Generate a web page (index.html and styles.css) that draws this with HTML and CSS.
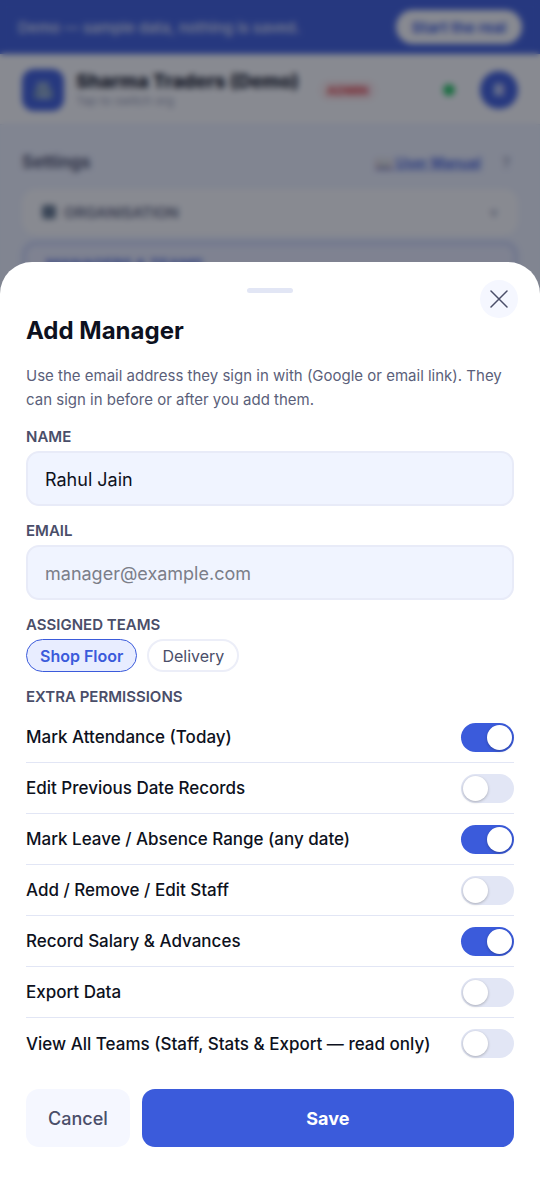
FILE: index.html
```html
<!DOCTYPE html>
<html lang="en">
  <head>
    <title>Sharma Traders (Demo) - Settings</title>
    <meta charset="UTF-8" />
    <meta name="viewport" content="width=device-width, initial-scale=1" />
    <link rel="stylesheet" href="styles.css">
  </head>
  <body>
    <div class="demo-bar">
      <span>Demo — sample data, nothing is saved.</span>
      <button class="demo-btn" type="button">Start the real</button>
    </div>

    <header class="topbar">
      <svg class="logo" viewBox="0 0 42 42" aria-hidden="true">
        <rect width="42" height="42" rx="12" fill="#3b5bdb" />
        <path d="M15 13h12v17H15z" fill="#9fb8d8" />
        <path d="M12 20h5v10h-5zM27 20h4v10h-4z" fill="#7594bc" />
        <path d="M18 16h2v3h-2zM23 16h2v3h-2zM18 22h2v3h-2zM23 22h2v3h-2z" fill="#3f5f8f" />
      </svg>
      <div class="org">
        <div class="org-name">Sharma Traders (Demo)</div>
        <div class="org-sub">Tap to switch org</div>
      </div>
      <span class="role">ADMIN</span>
      <span class="online"></span>
      <span class="avatar">R</span>
    </header>

    <main class="settings">
      <div class="settings-head">
        <h1>Settings</h1>
        <a href="#">📖 User Manual</a>
        <span class="more">?</span>
      </div>
      <div class="card">
        <span class="card-icon"></span>
        <span>ORGANISATION</span>
        <span class="chevron">▾</span>
      </div>
      <div class="card card-open">
        <span>MANAGERS &amp; TEAMS</span>
      </div>
    </main>

    <div class="overlay">
      <form class="sheet" role="dialog" aria-labelledby="sheet-title">
        <div class="handle"></div>
        <button class="close" type="button" aria-label="Close">
          <svg viewBox="0 0 18 18" aria-hidden="true">
            <path d="M1 1l16 16M17 1L1 17" />
          </svg>
        </button>
        <h2 id="sheet-title">Add Manager</h2>
        <p class="hint">
          Use the email address they sign in with (Google or email link). They
          can sign in before or after you add them.
        </p>

        <label class="label" for="name">NAME</label>
        <input class="text-input" id="name" type="text" value="Rahul Jain" />

        <label class="label" for="email">EMAIL</label>
        <input class="text-input" id="email" type="email" placeholder="manager@example.com" />

        <div class="label">ASSIGNED TEAMS</div>
        <div class="chips">
          <button class="chip chip-on" type="button" aria-pressed="true">Shop Floor</button>
          <button class="chip" type="button" aria-pressed="false">Delivery</button>
        </div>

        <div class="label">EXTRA PERMISSIONS</div>
        <div class="perms">
          <label class="perm">
            <span>Mark Attendance (Today)</span>
            <input class="toggle" type="checkbox" checked />
          </label>
          <label class="perm">
            <span>Edit Previous Date Records</span>
            <input class="toggle" type="checkbox" />
          </label>
          <label class="perm">
            <span>Mark Leave / Absence Range (any date)</span>
            <input class="toggle" type="checkbox" checked />
          </label>
          <label class="perm">
            <span>Add / Remove / Edit Staff</span>
            <input class="toggle" type="checkbox" />
          </label>
          <label class="perm">
            <span>Record Salary &amp; Advances</span>
            <input class="toggle" type="checkbox" checked />
          </label>
          <label class="perm">
            <span>Export Data</span>
            <input class="toggle" type="checkbox" />
          </label>
          <label class="perm">
            <span>View All Teams (Staff, Stats &amp; Export — read only)</span>
            <input class="toggle" type="checkbox" />
          </label>
        </div>

        <div class="actions">
          <button class="btn btn-cancel" type="button">Cancel</button>
          <button class="btn btn-save" type="submit">Save</button>
        </div>
      </form>
    </div>
  </body>
</html>
```
FILE: styles.css
```css
* {
  box-sizing: border-box;
}

body {
  margin: 0;
  font-family: Inter, "Open Sans", sans-serif;
  color: #0d1120;
  background: #f0f4ff;
}

button,
input {
  font-family: inherit;
}

/* page behind the sheet */
.demo-bar {
  display: flex;
  align-items: center;
  justify-content: space-between;
  height: 54px;
  padding: 0 18px;
  background: #3b5bdb;
  color: #e4e9fb;
  font-size: 15px;
  font-weight: 500;
}

.demo-btn {
  height: 34px;
  padding: 0 16px;
  border: 0;
  border-radius: 17px;
  background: #fff;
  color: #3b5bdb;
  font-size: 15px;
  font-weight: 700;
}

.topbar {
  display: flex;
  align-items: center;
  height: 71px;
  padding: 2px 22px 0;
  background: #fff;
  border-bottom: 1px solid #e2e6f5;
}

.logo {
  width: 42px;
  height: 42px;
  flex: none;
}

.org {
  margin: 0 20px 0 12px;
}

.org-name {
  font-size: 19px;
  line-height: 22px;
  font-weight: 800;
}

.org-sub {
  font-size: 12px;
  line-height: 16px;
  color: #9298b0;
}

.role {
  padding: 3px 8px;
  border-radius: 10px;
  background: #fff0f0;
  color: #e5484d;
  font-size: 12px;
  font-weight: 800;
}

.online {
  width: 12px;
  height: 12px;
  margin: 0 25px 0 auto;
  border-radius: 50%;
  background: #22c55e;
}

.avatar {
  width: 38px;
  height: 38px;
  border-radius: 50%;
  background: #3b5bdb;
  color: #fff;
  font-size: 16px;
  font-weight: 700;
  line-height: 38px;
  text-align: center;
}

.settings {
  padding: 22px;
}

.settings-head {
  display: flex;
  align-items: center;
  height: 30px;
  margin-bottom: 12px;
}

.settings-head h1 {
  margin: 0 auto 0 0;
  font-size: 17px;
  color: #4a4e69;
}

.settings-head a {
  color: #3b5bdb;
  font-size: 14px;
  font-weight: 600;
}

.more {
  margin: 0 8px 0 22px;
  color: #6b7090;
  font-size: 14px;
}

.card {
  display: flex;
  align-items: center;
  gap: 8px;
  height: 46px;
  margin-bottom: 6px;
  padding: 0 20px;
  border-radius: 14px;
  background: #fff;
  color: #5b5f7a;
  font-size: 15px;
  font-weight: 600;
}

.card-icon {
  width: 14px;
  height: 14px;
  border-radius: 3px;
  background: #62758a;
}

.chevron {
  margin-left: auto;
  color: #b8bccd;
}

.card-open {
  border: 4px solid #c9d3f7;
  background: #eceffe;
  color: #3b5bdb;
}

/* bottom sheet */
.overlay {
  position: fixed;
  inset: 0;
  display: flex;
  align-items: flex-end;
  background: rgba(17, 21, 36, 0.5);
  backdrop-filter: blur(3px);
}

.sheet {
  position: relative;
  width: 100%;
  padding: 26px 26px 52px;
  border-radius: 32px 32px 0 0;
  background: #fff;
}

.handle {
  width: 46px;
  height: 5px;
  margin: 0 auto 21px;
  border-radius: 3px;
  background: #e2e6f5;
}

.close {
  position: absolute;
  top: 18px;
  right: 22px;
  display: flex;
  align-items: center;
  justify-content: center;
  width: 38px;
  height: 38px;
  padding: 0;
  border: 0;
  border-radius: 50%;
  background: #f5f7ff;
}

.close svg {
  width: 18px;
  height: 18px;
  fill: none;
  stroke: #4a4e69;
  stroke-width: 1.5;
  stroke-linecap: round;
}

.sheet h2 {
  margin: 0 0 16px;
  font-size: 24px;
  line-height: 34px;
  font-weight: 700;
}

.hint {
  margin: 0;
  color: #5b5f7a;
  font-size: 15px;
  line-height: 24px;
}

.label {
  display: block;
  margin: 16px 0 5px;
  color: #4a4e69;
  font-size: 15px;
  line-height: 18px;
  font-weight: 600;
}

.text-input {
  display: block;
  width: 100%;
  height: 55px;
  padding: 2px 17px 0;
  border: 2px solid #e8ebf8;
  border-radius: 13px;
  background: #f0f4ff;
  color: #0d1120;
  font-size: 18px;
}

.text-input::placeholder {
  color: #7b7e89;
}

.chips {
  display: flex;
  gap: 10px;
}

.chip {
  height: 33px;
  padding: 0 13px;
  border: 2px solid #eceef8;
  border-radius: 17px;
  background: #fff;
  color: #4a4e69;
  font-size: 16px;
}

.chip-on {
  border: 1px solid #3b5bdb;
  background: #e8edff;
  color: #3b5bdb;
  font-weight: 600;
}

.perms {
  margin-top: 6px;
}

.perm {
  display: flex;
  align-items: center;
  justify-content: space-between;
  height: 51px;
  border-bottom: 1px solid #e2e6f5;
  font-size: 17px;
  font-weight: 500;
}

.perm:last-child {
  border-bottom: 0;
}

.toggle {
  appearance: none;
  flex: none;
  width: 53px;
  height: 29px;
  margin: 0;
  padding: 2px;
  border-radius: 15px;
  background: #e2e6f5;
}

.toggle::before {
  content: "";
  display: block;
  width: 25px;
  height: 25px;
  border-radius: 50%;
  background: #fff;
  box-shadow: 0 1px 3px rgba(0, 0, 0, 0.25);
}

.toggle:checked {
  background: #3b5bdb;
}

.toggle:checked::before {
  margin-left: auto;
}

.actions {
  display: flex;
  gap: 12px;
  margin-top: 20px;
}

.btn {
  height: 58px;
  padding: 0 22px;
  border: 0;
  border-radius: 13px;
  font-size: 18px;
}

.btn-cancel {
  background: #f5f7ff;
  color: #4a4e69;
  font-weight: 500;
}

.btn-save {
  flex: 1;
  background: #3b5bdb;
  color: #fff;
  font-weight: 700;
}
```
